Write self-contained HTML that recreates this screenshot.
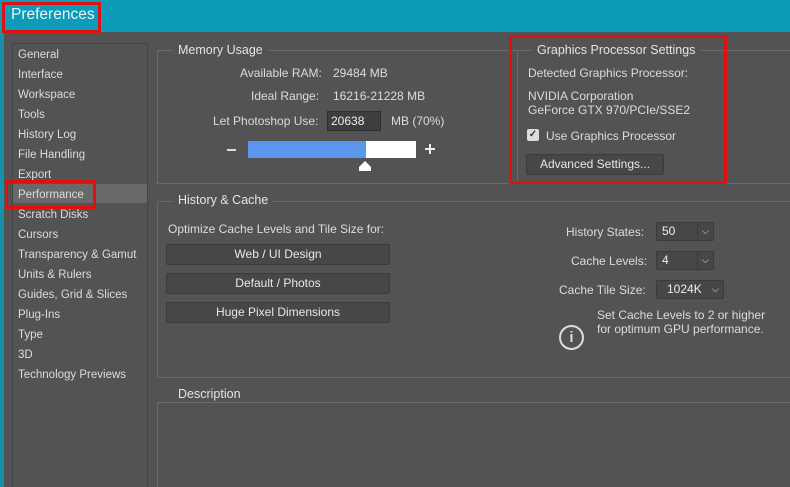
<!DOCTYPE html>
<html style="overflow:hidden;height:487px"><head><style>
*{margin:0;padding:0;box-sizing:border-box}
body{width:790px;height:487px;background:#535353;font-family:"Liberation Sans",sans-serif;font-size:12px;color:#dcdcdc;position:relative;overflow:hidden}
.a{position:absolute;white-space:nowrap}
.box{position:absolute;border:1px solid #6a6a6a}
.lg{position:absolute;background:#535353;padding:0 5px;font-size:12.5px;color:#e4e4e4}
.btn{position:absolute;background:#474747;border:1px solid #3b3b3b;border-radius:2px;text-align:center;color:#e8e8e8;line-height:19px}
.sel{position:absolute;background:#474747;border:1px solid #3b3b3b;border-radius:2px;height:19px;line-height:17px;padding-left:5px;color:#eee}
.red{position:absolute;border:3px solid #e01010}
</style></head><body>
<div class="a" style="left:0;top:0;width:790px;height:32px;background:#0e9bb9"></div>
<div class="a" style="left:0;top:32px;width:4px;height:455px;background:#1a8fa8"></div>
<div class="a" style="left:11px;top:6px;font-size:15.5px;color:#eaf6f9">Preferences</div>
<div class="red" style="left:2px;top:2px;width:99px;height:31px"></div>

<div class="box" style="left:12px;top:43px;width:136px;height:444px;border-color:#444;border-bottom:none"></div>
<div class="a" style="left:13px;top:184px;width:134px;height:19px;background:#696969"></div>
<div class="a" style="left:18px;top:45px;line-height:20px;font-size:11.5px">General<br>Interface<br>Workspace<br>Tools<br>History Log<br>File Handling<br>Export<br>Performance<br>Scratch Disks<br>Cursors<br>Transparency &amp; Gamut<br>Units &amp; Rulers<br>Guides, Grid &amp; Slices<br>Plug-Ins<br>Type<br>3D<br>Technology Previews</div>
<div class="red" style="left:5px;top:180px;width:91px;height:29px"></div>

<div class="box" style="left:157px;top:50px;width:640px;height:134px"></div>
<div class="lg" style="left:173px;top:43px">Memory Usage</div>
<div class="a" style="left:240px;top:66px">Available RAM:</div>
<div class="a" style="left:333px;top:66px">29484 MB</div>
<div class="a" style="left:251px;top:89px">Ideal Range:</div>
<div class="a" style="left:333px;top:89px">16216-21228 MB</div>
<div class="a" style="left:213px;top:114px">Let Photoshop Use:</div>
<div class="a" style="left:327px;top:111px;width:54px;height:20px;background:#3e3e3e;border:1px solid #2e2e2e;padding:2px 3px;color:#eee">20638</div>
<div class="a" style="left:391px;top:114px">MB (70%)</div>
<div class="a" style="left:227px;top:149px;width:9px;height:2px;background:#ddd"></div>
<div class="a" style="left:248px;top:141px;width:118px;height:17px;background:#5b96ee"></div>
<div class="a" style="left:366px;top:141px;width:50px;height:17px;background:#fff"></div>
<div class="a" style="left:425px;top:148px;width:10px;height:2px;background:#eee"></div>
<div class="a" style="left:429px;top:144px;width:2px;height:10px;background:#eee"></div>
<div class="a" style="left:359px;top:161px;width:12px;height:10px;background:#fff;clip-path:polygon(50% 0,100% 60%,100% 100%,0 100%,0 60%)"></div>

<div class="a" style="left:517px;top:42px;width:205px;height:140px;background:#535353"></div>
<div class="box" style="left:517px;top:50px;width:280px;height:134px"></div>
<div class="lg" style="left:532px;top:43px">Graphics Processor Settings</div>
<div class="a" style="left:528px;top:66px">Detected Graphics Processor:</div>
<div class="a" style="left:528px;top:89px;line-height:14px">NVIDIA Corporation<br>GeForce GTX 970/PCIe/SSE2</div>
<div class="a" style="left:527px;top:129px;width:12px;height:12px;background:#ddd;border-radius:2px;color:#333;font-size:10px;line-height:12px;text-align:center;font-weight:bold">✓</div>
<div class="a" style="left:546px;top:129px">Use Graphics Processor</div>
<div class="btn" style="left:526px;top:154px;width:138px;height:21px">Advanced Settings...</div>
<div class="red" style="left:509px;top:35px;width:218px;height:149px"></div>

<div class="box" style="left:157px;top:201px;width:640px;height:177px"></div>
<div class="lg" style="left:173px;top:193px">History &amp; Cache</div>
<div class="a" style="left:168px;top:222px">Optimize Cache Levels and Tile Size for:</div>
<div class="btn" style="left:166px;top:244px;width:224px;height:21px">Web / UI Design</div>
<div class="btn" style="left:166px;top:273px;width:224px;height:21px">Default / Photos</div>
<div class="btn" style="left:166px;top:302px;width:224px;height:21px">Huge Pixel Dimensions</div>
<div class="a" style="left:566px;top:225px">History States:</div>
<div class="sel" style="left:656px;top:222px;width:58px">50<span style="position:absolute;left:40px;top:0;border-left:1px solid #3b3b3b;padding-left:4px;font-size:9px">⌵</span></div>
<div class="a" style="left:571px;top:254px">Cache Levels:</div>
<div class="sel" style="left:656px;top:251px;width:58px">4<span style="position:absolute;left:40px;top:0;border-left:1px solid #3b3b3b;padding-left:4px;font-size:9px">⌵</span></div>
<div class="a" style="left:559px;top:283px">Cache Tile Size:</div>
<div class="sel" style="left:656px;top:280px;width:68px;padding-left:10px">1024K<span style="position:absolute;left:55px;top:0;font-size:9px">⌵</span></div>
<div class="a" style="left:597px;top:308px;line-height:14px">Set Cache Levels to 2 or higher<br>for optimum GPU performance.</div>
<div class="a" style="left:559px;top:325px;width:25px;height:25px;border:2px solid #ddd;border-radius:50%;text-align:center;font-size:15px;line-height:21px;font-weight:bold;color:#ddd">i</div>

<div class="box" style="left:157px;top:402px;width:640px;height:85px;border-bottom:none"></div>
<div class="lg" style="left:173px;top:387px">Description</div>
</body></html>
